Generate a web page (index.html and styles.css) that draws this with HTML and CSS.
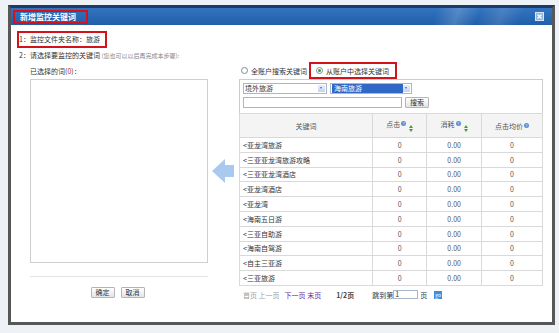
FILE: index.html
```html
<!DOCTYPE html>
<html lang="zh-CN">
<head>
    <meta charset="UTF-8">
    <title>新增监控关键词</title>
    <link rel="stylesheet" href="styles.css">
</head>
<body>

<div class="dialog">
    <div class="titlebar">
        <span class="title mark">新增监控关键词</span>
        <span class="close">
            <svg width="9" height="9" viewBox="0 0 9 9">
                <rect x="0.5" y="0.5" width="8" height="8" fill="#8fb4de" stroke="#d6e6f7"/>
                <path d="M2.5 2.5 L6.5 6.5 M6.5 2.5 L2.5 6.5" stroke="#ffffff" stroke-width="1.3"/>
            </svg>
        </span>
    </div>

    <div class="content">
        <div class="step mark">1：监控文件夹名称：旅游</div>
        <div class="step step2">2：请选择要监控的关键词 <span class="hint">(您也可以以后再完成本步骤):</span></div>

        <div class="main">
            <div class="left">
                <div class="col-head">已选择的词(<span class="red">0</span>)：</div>
                <div class="chosen"></div>
                <div class="divider"></div>
                <div class="actions">
                    <button class="btn">确定</button>
                    <button class="btn">取消</button>
                </div>
            </div>

            <div class="arrow">
                <svg width="22" height="24" viewBox="0 0 22 24">
                    <path d="M0 12 L13 0 L13 6 L22 6 L22 18 L13 18 L13 24 Z" fill="#a9c9ee"/>
                </svg>
            </div>

            <div class="right">
                <div class="col-head radios">
                    <span class="radio"></span><span class="radio-label">全账户搜索关键词</span>
                    <span class="mark choice"><span class="radio checked"></span><span class="radio-label">从账户中选择关键词</span></span>
                </div>

                <div class="panel">
                    <div class="filters">
                        <div class="select wide"><span class="value">境外旅游</span><span class="drop"></span></div>
                        <div class="select"><span class="value picked">海南旅游</span><span class="drop"></span></div>
                    </div>
                    <div class="search">
                        <div class="field"></div>
                        <button class="btn">搜索</button>
                    </div>

                    <table class="words">
                        <thead>
                            <tr>
                                <th class="c-word">关键词</th>
                                <th class="c-num">点击<span class="help">?</span><span class="sort"><i class="up"></i><i class="down"></i></span></th>
                                <th class="c-num">消耗<span class="help">?</span><span class="sort"><i class="up"></i><i class="down"></i></span></th>
                                <th class="c-avg">点击均价<span class="help">?</span></th>
                            </tr>
                        </thead>
                        <tbody>
                            <tr><td>&lt;亚龙湾旅游</td><td>0</td><td>0.00</td><td>0</td></tr>
                            <tr><td>&lt;三亚亚龙湾旅游攻略</td><td>0</td><td>0.00</td><td>0</td></tr>
                            <tr><td>&lt;三亚亚龙湾酒店</td><td>0</td><td>0.00</td><td>0</td></tr>
                            <tr><td>&lt;亚龙湾酒店</td><td>0</td><td>0.00</td><td>0</td></tr>
                            <tr><td>&lt;亚龙湾</td><td>0</td><td>0.00</td><td>0</td></tr>
                            <tr><td>&lt;海南五日游</td><td>0</td><td>0.00</td><td>0</td></tr>
                            <tr><td>&lt;三亚自助游</td><td>0</td><td>0.00</td><td>0</td></tr>
                            <tr><td>&lt;海南自驾游</td><td>0</td><td>0.00</td><td>0</td></tr>
                            <tr><td>&lt;自主三亚游</td><td>0</td><td>0.00</td><td>0</td></tr>
                            <tr><td>&lt;三亚旅游</td><td>0</td><td>0.00</td><td>0</td></tr>
                        </tbody>
                    </table>
                </div>

                <div class="pager">
                    <span class="off">首页 上一页</span>
                    <span class="link">下一页 末页</span>
                    <span class="count">1/2页</span>
                    <span class="jump">跳到第<span class="page-input">1</span>页</span>
                    <span class="go">go</span>
                </div>
            </div>
        </div>
    </div>
</div>

</body>
</html>
```

FILE: styles.css
```css
body {
    margin: 0;
    padding: 5px 0 0 8px;
    background-color: #eef1f5;
    font-family: "Noto Sans CJK SC", "Noto Sans", sans-serif;
    font-size: 7px;
    color: #333;
}

.dialog {
    width: 547px;
    height: 320px;
    box-sizing: border-box;
    border: 3px solid #575757;
    border-top-color: #1c3b66;
    background-color: #ffffff;
    display: flex;
    flex-direction: column;
}

.titlebar {
    height: 17px;
    display: flex;
    align-items: center;
    justify-content: space-between;
    padding: 0 8px 0 2px;
    background: linear-gradient(110deg, rgba(255,255,255,0) 78%, rgba(255,255,255,0.18) 82%, rgba(255,255,255,0) 86%, rgba(255,255,255,0.12) 90%, rgba(255,255,255,0) 94%),
                linear-gradient(#3474bf, #1f5ea9);
}

.title {
    color: #ffffff;
    font-weight: bold;
    font-size: 8px;
    line-height: 10px;
    padding: 0 10px 0 5px;
}

.close {
    display: flex;
}

.mark {
    border: 2px solid #d3121c;
}

.content {
    padding: 6px 0 0 6px;
}

.step {
    display: inline-block;
    height: 17px;
    box-sizing: border-box;
    line-height: 13px;
    padding: 0 5px 0 0;
}

.step.mark {
    padding-left: 0;
}

.step2 {
    display: block;
    border: none;
    height: 14px;
    line-height: 14px;
    padding-left: 2px;
}

.hint {
    color: #888;
    font-size: 6px;
}

.main {
    display: flex;
    margin-left: 13px;
}

.col-head {
    height: 17px;
    display: flex;
    align-items: center;
}

.red {
    color: #d3121c;
}

.left {
    width: 178px;
}

.chosen {
    height: 184px;
    border: 1px solid #cfcfcf;
    box-sizing: border-box;
}

.divider {
    margin-top: 13px;
    height: 1px;
    background-color: #e2e2e2;
}

.actions {
    margin-top: 10px;
    display: flex;
    justify-content: center;
    gap: 6px;
    padding-right: 3px;
}

.btn {
    height: 11px;
    width: 24px;
    padding: 0;
    font-family: inherit;
    font-size: 7px;
    line-height: 9px;
    color: #333;
    border: 1px solid #b5b5b5;
    border-radius: 1px;
    background: linear-gradient(#ffffff, #e4e4e4);
}

.arrow {
    width: 31px;
    height: 184px;
    margin-top: 17px;
    display: flex;
    align-items: center;
    padding-left: 4px;
    box-sizing: border-box;
}

.right {
    width: 304px;
}

.radios {
    padding-left: 2px;
}

.radio {
    width: 5px;
    height: 5px;
    border: 1px solid #7a8a9a;
    border-radius: 50%;
    background: #fff;
    display: inline-flex;
    align-items: center;
    justify-content: center;
    margin-right: 3px;
}

.radio.checked::after {
    content: "";
    width: 3px;
    height: 3px;
    border-radius: 50%;
    background-color: #3a9a3a;
}

.radio-label {
    margin-right: 2px;
}

.choice {
    height: 17px;
    box-sizing: border-box;
    display: inline-flex;
    align-items: center;
    padding: 0 4px 0 5px;
}

.panel {
    border: 1px solid #cccccc;
    padding: 3px 0 0 0;
}

.filters,
.search {
    display: flex;
    gap: 3px;
    padding-left: 3px;
}

.search {
    margin-top: 3px;
}

.select {
    width: 82px;
    height: 11px;
    box-sizing: border-box;
    border: 1px solid #a9b8c9;
    display: flex;
    align-items: center;
    justify-content: space-between;
    padding: 0 1px;
}

.select.wide {
    width: 84px;
}

.value {
    line-height: 9px;
}

.picked {
    background-color: #3168c6;
    color: #fff;
    padding: 0 2px;
    width: 67px;
}

.drop {
    width: 7px;
    height: 7px;
    background: linear-gradient(#e6effa, #c3d5ee);
    position: relative;
}

.drop::after {
    content: "";
    position: absolute;
    left: 2px;
    top: 2px;
    border-left: 1.5px solid transparent;
    border-right: 1.5px solid transparent;
    border-top: 2.5px solid #4d6d9a;
}

.field {
    width: 159px;
    height: 11px;
    box-sizing: border-box;
    border: 1px solid #a9b8c9;
}

.words {
    width: calc(100% + 2px);
    margin: 5px -1px -1px;
    border-collapse: collapse;
    font-size: 7px;
}

.words th,
.words td {
    border: 1px solid #d9d9d9;
    font-weight: normal;
    text-align: center;
    padding: 0;
    color: #555;
}

.words th {
    height: 23px;
    background-color: #f4f4f4;
}

.words td {
    height: 13.8px;
}

.words td:first-child {
    text-align: left;
    padding-left: 3px;
    color: #333;
}

.c-word { width: 134px; }
.c-num { width: 54px; }
.c-avg { width: 61px; }

.help {
    display: inline-block;
    width: 5px;
    height: 5px;
    border-radius: 50%;
    background-color: #5b8fd6;
    color: #fff;
    font-size: 4px;
    line-height: 5px;
    text-align: center;
    vertical-align: 2px;
    margin-left: 1px;
}

.sort {
    display: inline-flex;
    flex-direction: column;
    gap: 1px;
    margin-left: 3px;
    vertical-align: -1px;
}

.sort i {
    display: block;
    width: 0;
    height: 0;
    border-left: 2px solid transparent;
    border-right: 2px solid transparent;
}

.sort .up {
    border-bottom: 3px solid #4c9a3c;
}

.sort .down {
    border-top: 3px solid #4c9a3c;
}

.pager {
    margin-top: 4px;
    padding-left: 4px;
    display: flex;
    align-items: center;
    height: 10px;
}

.off {
    color: #a0a0a0;
}

.link {
    color: #6b2a8e;
    margin-left: 5px;
}

.count {
    margin-left: 15px;
    font-weight: bold;
    color: #444;
}

.jump {
    margin-left: 18px;
    display: flex;
    align-items: center;
}

.page-input {
    width: 25px;
    height: 9px;
    box-sizing: border-box;
    border: 1px solid #a9b8c9;
    line-height: 7px;
    padding-left: 1px;
    margin-right: 2px;
}

.go {
    margin-left: 7px;
    width: 8px;
    height: 8px;
    background-color: #3e8fd6;
    color: #fff;
    font-size: 5px;
    line-height: 8px;
    text-align: center;
}
```
